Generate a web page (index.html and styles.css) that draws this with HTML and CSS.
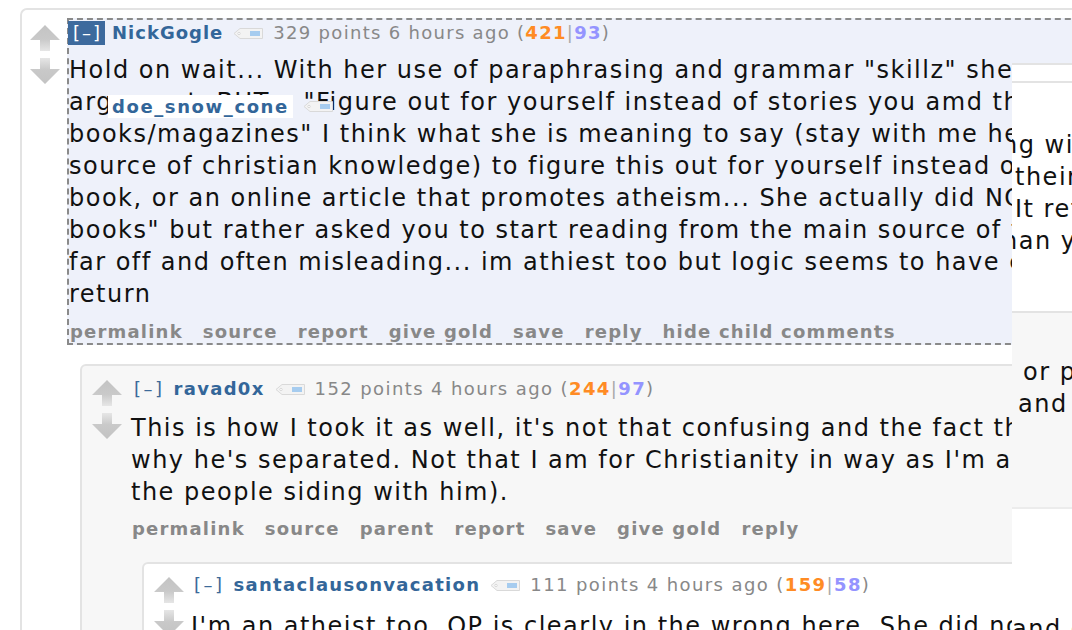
FILE: index.html
```html
<!DOCTYPE html>
<html>
<head>
<meta charset="utf-8">
<title>comments</title>
<link rel="stylesheet" href="styles.css">
</head>
<body>
<svg class="defs" aria-hidden="true">
  <defs>
    <linearGradient id="gUp" x1="0" y1="0" x2="0" y2="1">
      <stop offset="0" stop-color="#c3c3c3"/>
      <stop offset="0.55" stop-color="#c9c9c9"/>
      <stop offset="1" stop-color="#e6e6e6"/>
    </linearGradient>
    <linearGradient id="gDown" x1="0" y1="0" x2="0" y2="1">
      <stop offset="0" stop-color="#e6e6e6"/>
      <stop offset="0.45" stop-color="#c9c9c9"/>
      <stop offset="1" stop-color="#c3c3c3"/>
    </linearGradient>
  </defs>
</svg>
<div class="page">
  <div class="comment lv1">
    <div class="row">
      <div class="midcol">
        <svg class="arrow" width="30" height="26" viewBox="0 0 30 26"><path d="M15 0 L30 15 H20 V26 H10 V15 H0 Z" fill="url(#gUp)"/></svg>
        <svg class="arrow" width="30" height="26" viewBox="0 0 30 26"><path d="M10 0 H20 V11 H30 L15 26 L0 11 H10 Z" fill="url(#gDown)"/></svg>
      </div>
      <div class="entry hl">
        <div class="tagline">
          <span class="toggle sel">[–]</span>
          <span class="author">NickGogle</span>
          <svg class="flair" width="30" height="11" viewBox="0 0 30 11"><path d="M1 5.5 L7 0.5 H29.5 V10.5 H7 Z" fill="#f3f3f3" stroke="#d9d9d9"/><circle cx="6" cy="5.5" r="1.2" fill="#fff" stroke="#d0d0d0" stroke-width="0.8"/><rect x="17" y="3" width="10" height="5" fill="#a6ccef"/></svg>
          <span class="meta">329 points 6 hours ago (<b class="up">421</b><span class="pipe">|</span><b class="down">93</b>)</span>
        </div>
        <p class="md">Hold on wait... With her use of paraphrasing and grammar "skillz" she was trying to<br>argument, BUT... "Figure out for yourself instead of stories you amd the<br>books/magazines" I think what she is meaning to say (stay with me here as<br>source of christian knowledge) to figure this out for yourself instead of<br>book, or an online article that promotes atheism... She actually did NOT<br>books" but rather asked you to start reading from the main source of the<br>far off and often misleading... im athiest too but logic seems to have come<br>return</p>
        <ul class="buttons">
          <li>permalink</li>
          <li>source</li>
          <li>report</li>
          <li>give gold</li>
          <li>save</li>
          <li>reply</li>
          <li>hide child comments</li>
        </ul>
        <div class="hovercard">
          <span class="hc-name">doe_snow_cone</span>
          <svg class="flair" width="30" height="11" viewBox="0 0 30 11"><path d="M1 5.5 L7 0.5 H29.5 V10.5 H7 Z" fill="#f3f3f3" stroke="#d9d9d9"/><circle cx="6" cy="5.5" r="1.2" fill="#fff" stroke="#d0d0d0" stroke-width="0.8"/><rect x="17" y="3" width="10" height="5" fill="#a6ccef"/></svg>
        </div>
      </div>
    </div>
    <div class="child">
      <div class="comment lv2">
        <div class="row">
          <div class="midcol">
            <svg class="arrow" width="30" height="26" viewBox="0 0 30 26"><path d="M15 0 L30 15 H20 V26 H10 V15 H0 Z" fill="url(#gUp)"/></svg>
            <svg class="arrow" width="30" height="26" viewBox="0 0 30 26"><path d="M10 0 H20 V11 H30 L15 26 L0 11 H10 Z" fill="url(#gDown)"/></svg>
          </div>
          <div class="entry">
            <div class="tagline">
              <span class="toggle">[–]</span>
              <span class="author">ravad0x</span>
              <svg class="flair" width="30" height="11" viewBox="0 0 30 11"><path d="M1 5.5 L7 0.5 H29.5 V10.5 H7 Z" fill="#f3f3f3" stroke="#d9d9d9"/><circle cx="6" cy="5.5" r="1.2" fill="#fff" stroke="#d0d0d0" stroke-width="0.8"/><rect x="17" y="3" width="10" height="5" fill="#a6ccef"/></svg>
              <span class="meta">152 points 4 hours ago (<b class="up">244</b><span class="pipe">|</span><b class="down">97</b>)</span>
            </div>
            <p class="md">This is how I took it as well, it's not that confusing and the fact that<br>why he's separated. Not that I am for Christianity in way as I'm an<br>the people siding with him).</p>
            <ul class="buttons">
              <li>permalink</li>
              <li>source</li>
              <li>parent</li>
              <li>report</li>
              <li>save</li>
              <li>give gold</li>
              <li>reply</li>
            </ul>
          </div>
        </div>
        <div class="child">
          <div class="comment lv3">
            <div class="row">
              <div class="midcol">
                <svg class="arrow" width="30" height="26" viewBox="0 0 30 26"><path d="M15 0 L30 15 H20 V26 H10 V15 H0 Z" fill="url(#gUp)"/></svg>
                <svg class="arrow" width="30" height="26" viewBox="0 0 30 26"><path d="M10 0 H20 V11 H30 L15 26 L0 11 H10 Z" fill="url(#gDown)"/></svg>
              </div>
              <div class="entry">
                <div class="tagline">
                  <span class="toggle">[–]</span>
                  <span class="author">santaclausonvacation</span>
                  <svg class="flair" width="30" height="11" viewBox="0 0 30 11"><path d="M1 5.5 L7 0.5 H29.5 V10.5 H7 Z" fill="#f3f3f3" stroke="#d9d9d9"/><circle cx="6" cy="5.5" r="1.2" fill="#fff" stroke="#d0d0d0" stroke-width="0.8"/><rect x="17" y="3" width="10" height="5" fill="#a6ccef"/></svg>
                  <span class="meta">111 points 4 hours ago (<b class="up">159</b><span class="pipe">|</span><b class="down">58</b>)</span>
                </div>
                <p class="md">I'm an atheist too. OP is clearly in the wrong here. She did not</p>
                <ul class="buttons">
                  <li>permalink</li>
                  <li>source</li>
                  <li>parent</li>
                  <li>report</li>
                </ul>
              </div>
            </div>
          </div>
        </div>
      </div>
    </div>
  </div>

  <div class="overlay">
    <div class="ov-bar"></div>
    <div class="ov-white">
      <div class="ov-line cut">ng with</div>
      <div class="ov-line lead">their</div>
      <div class="ov-line lead">It returns</div>
      <div class="ov-line cut">han you</div>
    </div>
    <div class="ov-grey">
      <div class="ov-line or">or p</div>
      <div class="ov-line and">and</div>
    </div>
    <div class="ov-foot">
      <div class="ov-line">and c</div>
    </div>
  </div>
</div>
</body>
</html>
```
FILE: styles.css
```css
html, body {
  margin: 0;
  padding: 0;
  background: #fff;
  overflow: hidden;
}
body {
  width: 1072px;
  height: 630px;
  font-family: "DejaVu Sans", Verdana, sans-serif;
}
.defs {
  position: absolute;
  width: 0;
  height: 0;
}
.page {
  position: relative;
  width: 1072px;
  height: 630px;
  overflow: hidden;
  box-sizing: border-box;
  padding: 8px 0 0 20px;
}

/* comment boxes */
.comment {
  border: 2px solid #e3e3e3;
  border-radius: 7px;
}
.lv1 {
  width: 1400px;
  padding: 8px 0 0 8px;
  background: #fff;
}
.lv2 {
  padding: 0 0 0 10px;
  background: #f7f7f7;
  border-radius: 6px;
}
.lv3 {
  padding: 0 0 40px 10px;
  background: #fff;
  border-radius: 6px;
}
.row {
  display: flex;
  align-items: flex-start;
}
.midcol {
  flex: none;
  width: 30px;
  display: flex;
  flex-direction: column;
  gap: 7px;
}
.arrow {
  display: block;
}
.entry {
  flex: 1;
  min-width: 0;
}
.lv1 > .row > .midcol { margin-top: 7px; }
.lv1 > .row > .entry { margin-left: 7px; }
.lv2 > .row > .midcol { margin-top: 14px; }
.lv2 > .row > .entry { margin-left: 9px; padding-top: 11px; }
.lv3 > .row > .midcol { margin-top: 13px; }
.lv3 > .row > .entry { margin-left: 7px; padding-top: 9px; }

.entry.hl {
  position: relative;
  border: 2px dashed #8a8a8a;
  background: #eef1fa;
  padding-top: 1px;
}
.child {
  margin-left: 50px;
}
.lv1 > .child { margin-top: 19px; }
.lv2 > .child { margin-top: 22px; }

/* tagline */
.tagline {
  display: flex;
  align-items: baseline;
  font-size: 18px;
  letter-spacing: 1px;
  line-height: 24px;
  color: #888;
  white-space: nowrap;
}
.toggle {
  color: #3d6a9a;
  padding: 0 3px;
  margin-right: 6px;
  letter-spacing: 2.5px;
}
.toggle.sel {
  background: #3d6a9d;
  color: #fff;
  padding: 0 3px 0 5px;
  margin-left: -1px;
  margin-right: 7px;
  letter-spacing: 2px;
}
.author {
  color: #336699;
  font-weight: bold;
  letter-spacing: 1.3px;
  margin-right: 10px;
}
.meta {
  letter-spacing: 1.4px;
}
.sel ~ .author {
  letter-spacing: 1px;
}
.sel ~ .meta {
  letter-spacing: 1.3px;
}
.flair {
  flex: none;
  margin-right: 10px;
}
.up {
  color: #ff8b24;
}
.down {
  color: #9494ff;
}
.pipe {
  color: #aaa;
}

/* body */
.md {
  margin: 10px 0 0;
  font-size: 24px;
  letter-spacing: 1.5px;
  line-height: 32px;
  color: #111;
  white-space: nowrap;
}
.lv1 > .row > .entry > .md { margin-top: 9px; }
.lv2 > .row > .entry > .md { margin-top: 11px; }
.lv3 > .row > .entry > .md { margin-top: 13px; }

.buttons {
  list-style: none;
  margin: 11px 0 0;
  padding: 0 0 0 1px;
  display: flex;
  gap: 20px;
  font-size: 18px;
  font-weight: bold;
  letter-spacing: 1.2px;
  line-height: 22px;
  color: #888;
  white-space: nowrap;
}
.lv2 > .row > .entry > .buttons { margin-top: 10px; }

/* floating user label */
.hovercard {
  position: absolute;
  left: 39px;
  top: 75px;
  display: flex;
  align-items: center;
  gap: 10px;
}
.hc-name {
  background: #fff;
  color: #336699;
  font-weight: bold;
  font-size: 18px;
  letter-spacing: 1.6px;
  line-height: 23px;
  padding: 0 4px;
}

/* overlapping panel on the right edge */
.overlay {
  position: absolute;
  left: 1012px;
  top: 63px;
  width: 60px;
  bottom: 0;
  background: #fff;
  overflow: hidden;
  font-size: 24px;
  letter-spacing: 1.5px;
  line-height: 32px;
  color: #111;
  white-space: nowrap;
}
.ov-bar {
  height: 16px;
  border-top: 2px solid #e3e3e3;
  border-bottom: 2px solid #e3e3e3;
}
.ov-white {
  height: 182px;
  padding-top: 46px;
}
.ov-grey {
  border-top: 2px solid #e3e3e3;
  background: #f7f7f7;
  height: 151px;
  padding-top: 43px;
}
.ov-foot {
  border-top: 2px solid #ececec;
  padding-top: 104px;
}
.ov-line.cut { text-indent: -10px; }
.ov-line.lead { text-indent: 3px; }
.ov-line.or { text-indent: 11px; }
.ov-line.and { text-indent: 6px; }
```
